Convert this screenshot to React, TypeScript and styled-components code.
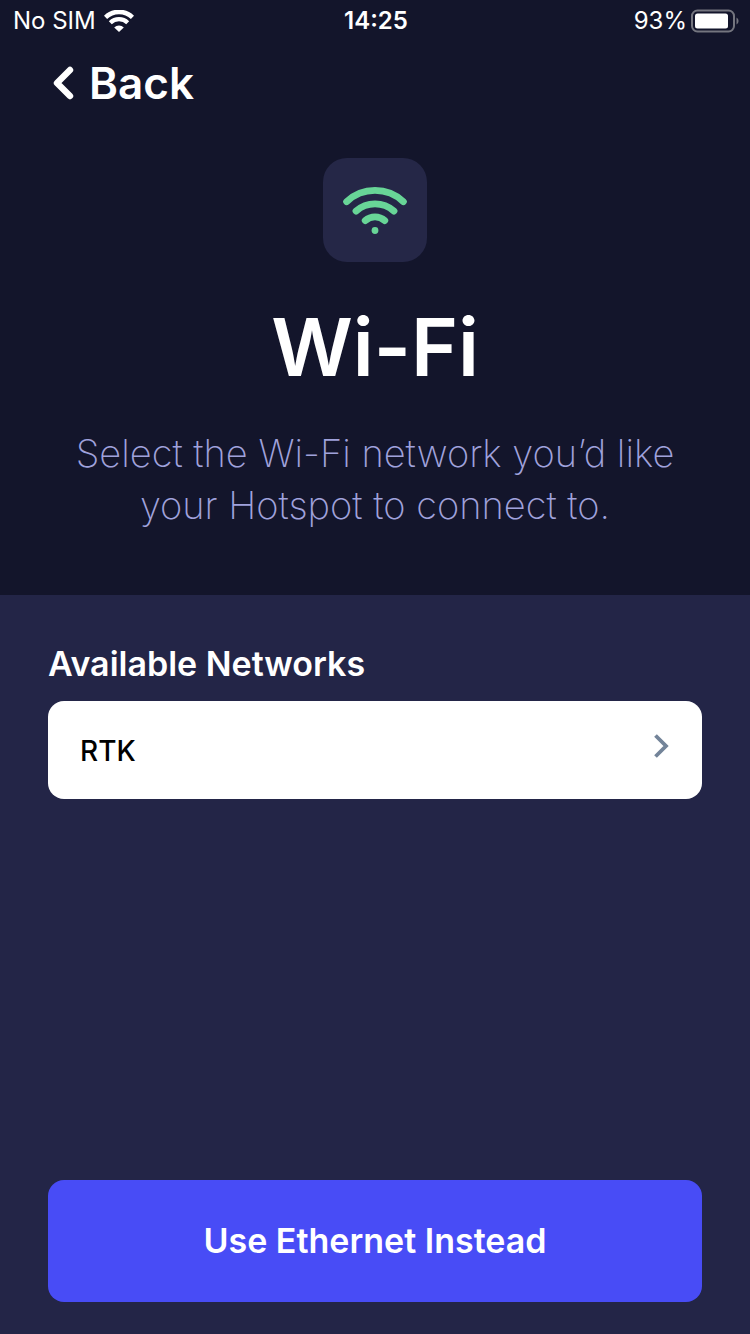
import React from "react";
import styled, { createGlobalStyle } from "styled-components";

const GlobalStyle = createGlobalStyle`
  *, *::before, *::after { box-sizing: border-box; }
  body {
    margin: 0;
    background: #232547;
    color: #ffffff;
    font-family: Inter, "Liberation Sans", sans-serif;
  }
  button { font-family: inherit; border: 0; cursor: pointer; }
`;

const Page = styled.div`
  min-height: 100vh;
  display: flex;
  flex-direction: column;
`;

const Hero = styled.header`
  background: #13152b;
  padding-bottom: 64px;
`;

const StatusBar = styled.div`
  display: grid;
  grid-template-columns: 1fr auto 1fr;
  align-items: center;
  height: 40px;
  padding: 0 11px 0 13px;
  font-size: 24px;
  line-height: 42px;
`;

const StatusGroup = styled.div<{ $end?: boolean }>`
  display: flex;
  align-items: center;
  justify-content: ${(p) => (p.$end ? "flex-end" : "flex-start")};
  gap: ${(p) => (p.$end ? 4 : 8)}px;
`;

const Clock = styled.time`
  font-weight: 600;
`;

const BackButton = styled.button`
  display: flex;
  align-items: center;
  gap: 14px;
  margin: 16px 0 0 52px;
  padding: 0;
  background: none;
  color: inherit;
  font-size: 44px;
  font-weight: 600;
  font-optical-sizing: none;
  line-height: 54px;
`;

const Intro = styled.div`
  display: flex;
  flex-direction: column;
  align-items: center;
  padding: 48px 48px 0;
  text-align: center;
`;

const IconTile = styled.div`
  display: flex;
  align-items: center;
  justify-content: center;
  width: 104px;
  height: 104px;
  border-radius: 24px;
  background: #252747;
`;

const Title = styled.h1`
  margin: 37px 0 0;
  font-size: 80px;
  font-weight: 600;
  line-height: 96px;
`;

const Description = styled.p`
  max-width: 654px;
  margin: 32px 0 0;
  color: #a0a2dc;
  font-size: 38px;
  font-weight: 200;
  font-optical-sizing: none;
  line-height: 52px;
`;

const Content = styled.main`
  flex: 1;
  display: flex;
  flex-direction: column;
  padding: 48px 48px 32px;
`;

const SectionTitle = styled.h2`
  margin: 0 0 16px;
  font-size: 34px;
  font-weight: 600;
  line-height: 42px;
`;

const NetworkList = styled.ul`
  flex: 1;
  margin: 0;
  padding: 0;
  list-style: none;
`;

const NetworkButton = styled.button`
  display: flex;
  justify-content: space-between;
  align-items: flex-start;
  width: 100%;
  padding: 32px 33px 30px 32px;
  border-radius: 16px;
  background: #ffffff;
  color: #000000;
  font-size: 28px;
  font-weight: 500;
  line-height: 36px;
`;

const PrimaryButton = styled.button`
  width: 100%;
  padding: 40px 24px;
  border-radius: 16px;
  background: #484cf6;
  color: #ffffff;
  font-size: 34px;
  font-weight: 600;
  line-height: 42px;
`;

const SignalIcon = () => (
  <svg width="30" height="22" viewBox="0 0 30 22" fill="none" aria-hidden="true">
    <path d="M1.500 7.400a19.300 19.300 0 0 1 27 0" stroke="#fff" strokeWidth="4.600" />
    <path d="M6.300 12.700a12.400 12.400 0 0 1 17.400 0" stroke="#fff" strokeWidth="4.200" />
    <path d="M10.200 17.400a6.900 6.900 0 0 1 9.600 0L15 22z" fill="#fff" />
  </svg>
);

const BatteryIcon = () => (
  <svg width="48" height="24" viewBox="0 0 48 24" fill="none" aria-hidden="true">
    <rect x="1" y="1.500" width="42" height="21" rx="5.500" stroke="#74757f" strokeWidth="2" />
    <rect x="4" y="4.500" width="33" height="15" rx="2.500" fill="#fff" />
    <path d="M45.500 8.500c2.700 1.500 2.700 5.500 0 7z" fill="#74757f" />
  </svg>
);

const BackIcon = () => (
  <svg width="23" height="34" viewBox="0 0 23 34" fill="none" aria-hidden="true">
    <path d="M18 4L5 17l13 13" stroke="#fff" strokeWidth="6.400" strokeLinecap="round" strokeLinejoin="round" />
  </svg>
);

const WifiIcon = () => (
  <svg width="64" height="48" viewBox="0 0 64 48" fill="none" stroke="#68d597" strokeWidth="6.800" strokeLinecap="round" aria-hidden="true">
    <path d="M3.600 15.700a41.500 41.500 0 0 1 56.800 0" />
    <path d="M13 25.100a28.600 28.600 0 0 1 38 0" />
    <path d="M22.200 34.600a14.800 14.800 0 0 1 19.600 0" />
    <circle cx="32" cy="44.500" r="3.400" fill="#68d597" stroke="none" />
  </svg>
);

const ForwardIcon = () => (
  <svg width="16" height="26" viewBox="0 0 16 26" fill="none" aria-hidden="true">
    <path d="M2.500 2.500L13 13 2.500 23.500" stroke="#738499" strokeWidth="3.800" />
  </svg>
);

const networks = ["RTK"];

export default function App() {
  return (
    <Page>
      <GlobalStyle />
      <Hero>
        <StatusBar>
          <StatusGroup>
            <span>No SIM</span>
            <SignalIcon />
          </StatusGroup>
          <Clock>14:25</Clock>
          <StatusGroup $end>
            <span>93%</span>
            <BatteryIcon />
          </StatusGroup>
        </StatusBar>
        <BackButton type="button">
          <BackIcon />
          Back
        </BackButton>
        <Intro>
          <IconTile>
            <WifiIcon />
          </IconTile>
          <Title>Wi-Fi</Title>
          <Description>
            Select the Wi-Fi network you’d like your Hotspot to connect to.
          </Description>
        </Intro>
      </Hero>
      <Content>
        <SectionTitle>Available Networks</SectionTitle>
        <NetworkList>
          {networks.map((name) => (
            <li key={name}>
              <NetworkButton type="button">
                {name}
                <ForwardIcon />
              </NetworkButton>
            </li>
          ))}
        </NetworkList>
        <PrimaryButton type="button">Use Ethernet Instead</PrimaryButton>
      </Content>
    </Page>
  );
}
